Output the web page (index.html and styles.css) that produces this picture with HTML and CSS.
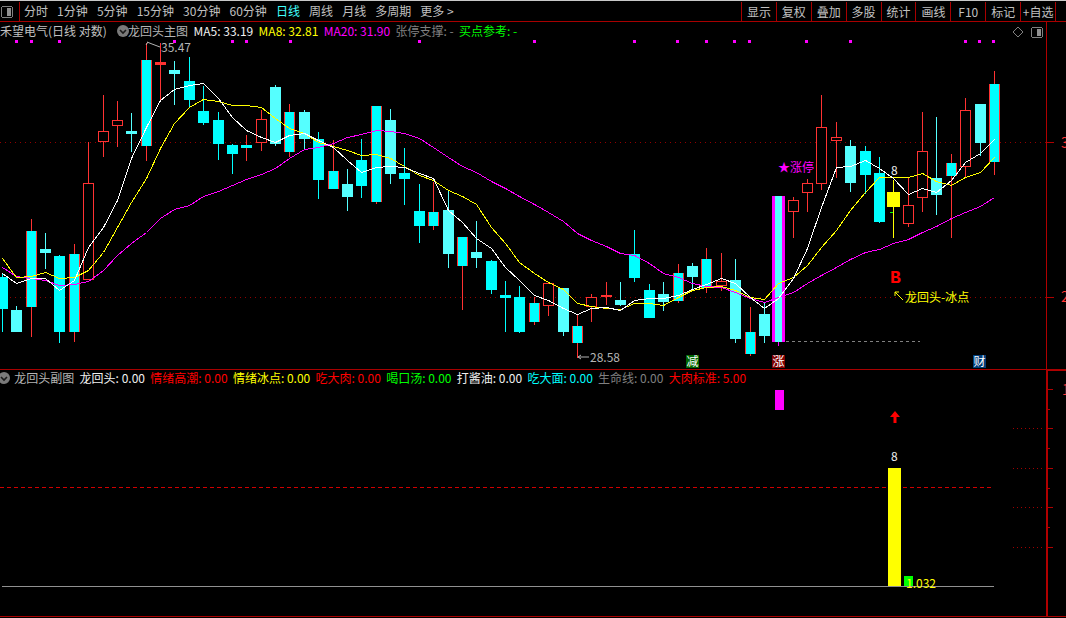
FILE: index.html
```html
<!DOCTYPE html>
<html lang="zh">
<head>
<meta charset="utf-8">
<title>龙回头</title>
<link rel="stylesheet" href="styles.css">
</head>
<body>
<div class="app">
  <header class="toolbar">
    <div class="tool-icon">
      <svg class="win-icon" width="14" height="14" viewBox="0 0 14 14"><rect x="1.5" y="1.5" width="11" height="11" rx="2" class="icon-frame"/><rect x="7" y="3" width="4" height="8" class="icon-fill"/></svg>
    </div>
    <nav class="periods">
      <span>分时</span><span>1分钟</span><span>5分钟</span><span>15分钟</span><span>30分钟</span><span>60分钟</span><span class="active">日线</span><span>周线</span><span>月线</span><span>多周期</span><span>更多 &gt;</span>
    </nav>
    <nav class="actions">
      <span>显示</span><span>复权</span><span>叠加</span><span>多股</span><span>统计</span><span>画线</span><span>F10</span><span>标记</span><span>+自选</span><span>+</span>
    </nav>
  </header>

  <section class="pane pane-main">
    <svg id="mainChart" class="chart" width="1066" height="347" viewBox="0 22 1066 347">
      <g id="mainGrid"></g>
      <g id="candles"></g>
      <g id="maLines"></g>
      <g id="markers"></g>
      <g class="axis-lines">
        <rect x="1046" y="22" width="1" height="347" class="red-line"/>
        <rect x="1047" y="142" width="7" height="1" class="red-line"/>
        <rect x="1047" y="297" width="7" height="1" class="red-line"/>
      </g>
      <text x="1061" y="148" class="axis-label">3</text>
      <text x="1061" y="302" class="axis-label">2</text>

      <path d="M148 42 L146 45 M147 42 L152 44 L160 47" class="ann-grey"/>
      <text x="161" y="52" class="ann t-grey">35.47</text>
      <path d="M578 357 H589 M578 357 L581 355 M578 357 L581 359" class="ann-grey"/>
      <text x="590" y="362" class="ann t-grey">28.58</text>
      <text x="778" y="172" class="ann t-magenta">★涨停</text>
      <text x="891" y="175" class="ann t-white">8</text>
      <rect x="890" y="212" width="3" height="1" class="green-fill"/>
      <text x="890" y="283" class="ann-b">B</text>
      <path d="M895 292 L903 300 M895 292 V296 M895 292 H899" class="ann-yellow"/>
      <text x="905" y="302" class="ann t-yellow">龙回头-冰点</text>
      <line x1="786" y1="341.5" x2="920" y2="341.5" class="ann-dash"/>

      <rect x="686" y="355" width="13" height="13" class="tag-green"/>
      <text x="686.5" y="366" class="tag-text">减</text>
      <rect x="772" y="355" width="13" height="13" class="tag-red"/>
      <text x="772.5" y="366" class="tag-text">涨</text>
      <rect x="973" y="355" width="13" height="13" class="tag-blue"/>
      <text x="973.5" y="366" class="tag-text">财</text>

      <path d="M1018 27 L1023 32 L1018 37 L1013 32 Z" class="icon-frame"/>
      <rect x="1031.5" y="27.5" width="11" height="10" rx="2" class="icon-frame"/>
      <rect x="1037" y="29" width="4" height="7" class="icon-fill"/>
    </svg>
    <div class="legend legend-main">
      <span class="name">禾望电气(日线 对数)</span>
      <svg class="chev" width="12" height="12" viewBox="0 0 12 12"><circle cx="6" cy="6" r="6" class="chev-bg"/><path d="M3 5 L6 8 L9 5" class="chev-mark"/></svg>
      <span class="t-grey">龙回头主图</span>
      <span class="t-white">MA5: 33.19</span>
      <span class="t-yellow">MA8: 32.81</span>
      <span class="t-magenta">MA20: 31.90</span>
      <span class="t-dim">张停支撑: -</span>
      <span class="t-green">买点参考: -</span>
    </div>
  </section>

  <section class="pane pane-sub">
    <svg id="subChart" class="chart" width="1066" height="246" viewBox="0 370 1066 246">
      <g id="subGrid"></g>
      <rect x="1046" y="370" width="2" height="246" class="red-line"/>
      <rect x="1046" y="370" width="20" height="1" class="red-line"/>
      <text x="1062" y="395" class="axis-label">1</text>

      <line x1="0" y1="487.5" x2="994" y2="487.5" class="sub-dash"/>
      <rect x="775" y="390" width="9" height="20" class="magenta-fill"/>
      <path d="M895 411 L900 417 H896.5 V423 H893.5 V417 H890 Z" class="red-fill"/>
      <text x="891" y="461" class="ann t-white">8</text>
      <rect x="888" y="468" width="13" height="118" class="yellow-fill"/>
      <rect x="904" y="576" width="9" height="10" class="green-fill"/>
      <rect x="2" y="586" width="992" height="1" class="base-line"/>
      <text x="906" y="588" class="ann t-yellow">1.032</text>
    </svg>
    <div class="legend legend-sub">
      <svg class="chev" width="12" height="12" viewBox="0 0 12 12"><circle cx="6" cy="6" r="6" class="chev-bg"/><path d="M3 5 L6 8 L9 5" class="chev-mark"/></svg>
      <span class="t-grey">龙回头副图</span>
      <span class="t-white">龙回头: 0.00</span>
      <span class="t-red">情绪高潮: 0.00</span>
      <span class="t-yellow">情绪冰点: 0.00</span>
      <span class="t-red">吃大肉: 0.00</span>
      <span class="t-green">喝口汤: 0.00</span>
      <span class="t-white">打酱油: 0.00</span>
      <span class="t-cyan">吃大面: 0.00</span>
      <span class="t-dim">生命线: 0.00</span>
      <span class="t-red">大肉标准: 5.00</span>
    </div>
  </section>
</div>
<script src="chart.js"></script>
</body>
</html>
```
FILE: styles.css
```css
* { box-sizing: border-box; }
html, body { margin: 0; padding: 0; background: #000; overflow: hidden; }
.app {
  width: 1066px;
  height: 618px;
  background: #000;
  display: flex;
  flex-direction: column;
  font-family: "Noto Sans CJK SC", "Liberation Sans", sans-serif;
  font-size: 12px;
  color: #c0c0c0;
  overflow: hidden;
}
.toolbar {
  height: 22px;
  flex: none;
  display: flex;
  align-items: stretch;
  border-top: 1px solid #c8c8c8;
  border-bottom: 1px solid #a80000;
  line-height: 20px;
  white-space: nowrap;
}
.tool-icon {
  width: 20px;
  flex: none;
  display: flex;
  align-items: center;
  padding-left: 0;
  border-right: 1px solid #a80000;
  margin-top: 1px;
}
.win-icon { display: block; }
.icon-frame { fill: none; stroke: #808080; stroke-width: 1; shape-rendering: crispEdges; }
.icon-fill { fill: #909090; }
.periods { display: flex; gap: 9.1px; padding-left: 4px; }
.periods .active { color: #40ffff; }
.actions { display: flex; margin-left: auto; width: 325px; flex: none; }
.actions span {
  flex: none;
  width: 34.9px;
  text-align: center;
  border-left: 1px solid #a80000;
  margin-top: 1px;
}
.pane { position: relative; flex: none; }
.pane-main { height: 348px; border-bottom: 1px solid #a80000; }
.pane-sub { height: 247px; border-bottom: 1px solid #a80000; }
.chart { display: block; }
.legend {
  position: absolute;
  left: 0;
  display: flex;
  align-items: center;
  gap: 5.4px;
  white-space: nowrap;
  line-height: 18px;
}
.legend-main { top: 0; }
.legend-sub { top: -1px; gap: 5.3px; }
.legend-main .chev { margin-left: 5px; }
.legend-main .chev + span { margin-left: -6.5px; }
.legend-sub .chev { margin-left: -2px; margin-right: -1px; }
.chev { display: block; flex: none; }
.chev-bg { fill: #7a7a7a; }
.chev-mark { fill: none; stroke: #1a1a1a; stroke-width: 1.6; }
.name { color: #c0c0c0; }
.t-grey { color: #b4b4b4; fill: #b4b4b4; }
.t-white { color: #f0f0f0; fill: #f0f0f0; }
.t-yellow { color: #ffff00; fill: #ffff00; }
.t-magenta { color: #ff00ff; fill: #ff00ff; }
.t-dim { color: #808080; fill: #808080; }
.t-green { color: #00ff00; fill: #00ff00; }
.t-red { color: #ff0000; fill: #ff0000; }
.t-cyan { color: #00ffff; fill: #00ffff; }

.grid-dot { stroke: #900000; stroke-width: 1; stroke-dasharray: 1 4; shape-rendering: crispEdges; }
.sub-dot { stroke: #a00000; stroke-width: 1; stroke-dasharray: 1 3; shape-rendering: crispEdges; }
.red-line { fill: #b00000; }
.axis-label { fill: #ff3232; font-size: 14px; }
.ma { fill: none; stroke-width: 1; shape-rendering: crispEdges; }
.ma-white { stroke: #ffffff; }
.ma-yellow { stroke: #ffff00; }
.ma-magenta { stroke: #ff00ff; }
.cd { shape-rendering: crispEdges; }
.c-cyan { fill: #00ffff; }
.c-light { fill: #55ffff; }
.c-red { fill: #ff3232; }
.c-hollow { fill: #000; stroke: #ff3232; stroke-width: 1; }
.c-yellow { fill: #ffff00; }
.c-magenta { fill: #ff00ff; }
.marker { fill: #ff00ff; }
.ann { font-size: 12px; }
.ann-b { fill: #ff0000; font-size: 18px; font-weight: 700; font-family: "Liberation Mono", monospace; }
.ann-grey { fill: none; stroke: #b4b4b4; stroke-width: 1; }
.ann-yellow { fill: none; stroke: #ffff00; stroke-width: 1; }
.ann-dash { stroke: #808080; stroke-width: 1; stroke-dasharray: 3 3; }
.sub-dash { stroke: #d00000; stroke-width: 1; stroke-dasharray: 4 3; shape-rendering: crispEdges; }
.tag-green { fill: #006400; }
.tag-red { fill: #800000; }
.tag-blue { fill: #003c78; }
.tag-text { fill: #fff; font-size: 12px; }
.green-fill { fill: #00ff00; }
.yellow-fill { fill: #ffff00; }
.magenta-fill { fill: #ff00ff; }
.red-fill { fill: #ff0000; }
.base-line { fill: #909090; }
```
FILE: chart.js
```js
var SVGNS = "http://www.w3.org/2000/svg";
function el(parent, tag, attrs) {
  var n = document.createElementNS(SVGNS, tag);
  for (var k in attrs) n.setAttribute(k, attrs[k]);
  document.getElementById(parent).appendChild(n);
}
function cx(i) { return Math.floor(2.4 + 14.377 * i); }

// type, high, body top, body bottom, low
var bars = [
  ["c",273,277,308,331],["l",306,310,331,331],["x",219,231,306,336],["l",233,249,252,268],
  ["c",255,256,331,342],["x",244,254,331,341],["r",142,183,279,279],["r",95,131,141,156],
  ["r",101,120,125,146],["l",113,131,133,151],["x",43,60,145,160],["R",43,62,64,101],
  ["l",61,70,73,104],["c",57,81,99,107],["c",86,111,122,124],["c",112,120,143,159],
  ["c",144,145,153,173],["d",135,145,147,160],["r",110,119,142,150],["l",85,87,143,145],
  ["x",104,112,151,156],["l",110,112,138,149],["c",132,139,179,198],["x",140,171,188,188],
  ["l",169,184,196,210],["c",139,160,185,197],["x",106,106,201,203],["l",109,120,173,183],
  ["c",148,173,178,204],["c",184,211,225,242],["x",182,212,225,229],["l",190,210,253,267],
  ["x",237,237,265,309],["l",221,252,257,267],["c",260,261,289,293],["c",281,295,297,331],
  ["c",286,297,331,332],["x",297,303,321,324],["r",282,283,305,315],["l",288,288,331,335],
  ["x",315,326,342,357],["r",294,297,306,321],["R",282,295,296,304],["l",282,300,304,305],
  ["c",230,254,277,281],["c",284,290,317,317],["l",282,294,301,310],["x",264,273,300,302],
  ["l",263,266,276,288],["x",248,259,287,292],["r",253,281,285,290],["l",259,280,338,342],
  ["x",307,332,353,355],["l",302,314,335,342],["m",196,196,341,345],["r",197,200,211,237],
  ["r",179,183,192,211],["r",95,127,183,189],["r",122,137,140,177],["l",140,146,182,191],
  ["c",146,151,174,193],["c",157,173,221,222],["y",180,192,206,237],["r",177,205,223,226],
  ["r",112,151,197,211],["l",117,178,194,214],["x",154,163,175,237],["r",98,110,166,177],
  ["l",104,104,142,155],["x",71,84,161,174]
];
var white = [273,283,278,278,290,280,247,227,200,158,127,100,89,85,83,98,117,130,137,142,135,133,140,147,160,172,167,166,167,173,178,210,222,238,248,267,280,295,300,308,314,308,307,310,300,298,298,295,289,284,278,283,297,308,298,278,248,207,167,166,160,168,178,194,188,192,180,162,153,139];
var yellow = [258,277,276,272,278,277,270,252,227,202,178,148,123,107,99,101,105,105,107,118,128,133,142,146,150,155,154,158,166,175,180,190,196,204,227,243,262,273,282,289,303,306,308,309,303,303,305,297,290,287,286,290,297,299,283,277,265,247,230,210,192,177,177,177,173,181,185,177,172,157];
var magenta = [267,276,278,280,285,284,281,270,255,243,232,218,209,205,196,191,185,179,174,168,158,149,147,143,137,134,130,131,133,138,147,157,166,172,181,188,196,204,212,221,233,240,246,253,255,263,273,277,283,286,287,292,298,302,297,292,283,275,267,259,252,249,243,239,232,226,218,212,206,197];

function rect(p, x, y, w, h, cls) {
  el(p, "rect", { x: x, y: y, width: w, height: h, "class": "cd " + cls });
}
function candle(b, i) {
  var t = b[0], x = cx(i), hi = b[1], top = b[2], bot = b[3] + 1, lo = b[4] + 1, h = bot - top;
  var wick = { c: "c-cyan", l: "c-light", x: "c-red", r: "c-red", R: "c-red", d: "c-red", y: "c-yellow", m: "c-magenta" }[t];
  if (top > hi) rect("candles", x, hi, 1, top - hi, wick);
  if (lo > bot) rect("candles", x, bot, 1, lo - bot, wick);
  if (t === "c") rect("candles", x - 5, top, 11, h, "c-cyan");
  if (t === "l") rect("candles", x - 5, top, 11, h, "c-light");
  if (t === "d") rect("candles", x - 5, top, 11, h, "c-cyan");
  if (t === "R") rect("candles", x - 5, top, 11, h, "c-red");
  if (t === "r") rect("candles", x - 4.5, top + 0.5, 10, h - 1, "c-hollow");
  if (t === "x") {
    rect("candles", x - 5, top, 11, h, "c-cyan");
    rect("candles", x - 5, top, 1, h, "c-red");
    rect("candles", x + 5, top, 1, h, "c-red");
  }
  if (t === "y") rect("candles", x - 6, top, 13, h, "c-yellow");
  if (t === "m") {
    rect("candles", x - 6, top, 13, h, "c-light");
    rect("candles", x - 6, top, 3, h, "c-magenta");
    rect("candles", x + 4, top, 3, h, "c-magenta");
  }
}
bars.forEach(candle);

function ma(values, cls) {
  var pts = values.map(function (v, i) { return (cx(i) + 0.5) + "," + (v + 0.5); }).join(" ");
  el("maLines", "polyline", { points: pts, "class": "ma " + cls });
}
ma(magenta, "ma-magenta");
ma(yellow, "ma-yellow");
ma(white, "ma-white");

[16,31,59,174,232,246,290,419,534,634,677,706,734,749,806,850,965,979,993].forEach(function (x) {
  el("markers", "rect", { x: x - 1, y: 40, width: 3, height: 3, "class": "marker" });
});

[142.5, 297.5].forEach(function (y) {
  el("mainGrid", "line", { x1: 0, y1: y, x2: 1046, y2: y, "class": "grid-dot" });
});

[428, 468, 507, 547].forEach(function (y) {
  el("subGrid", "line", { x1: 1013, y1: y + 0.5, x2: 1042, y2: y + 0.5, "class": "sub-dot" });
});
[389, 409, 428, 448, 468, 488, 507, 527, 547].forEach(function (y, i) {
  el("subGrid", "rect", { x: 1048, y: y, width: i % 2 ? 2 : 5, height: 1, "class": "red-line" });
});
```
